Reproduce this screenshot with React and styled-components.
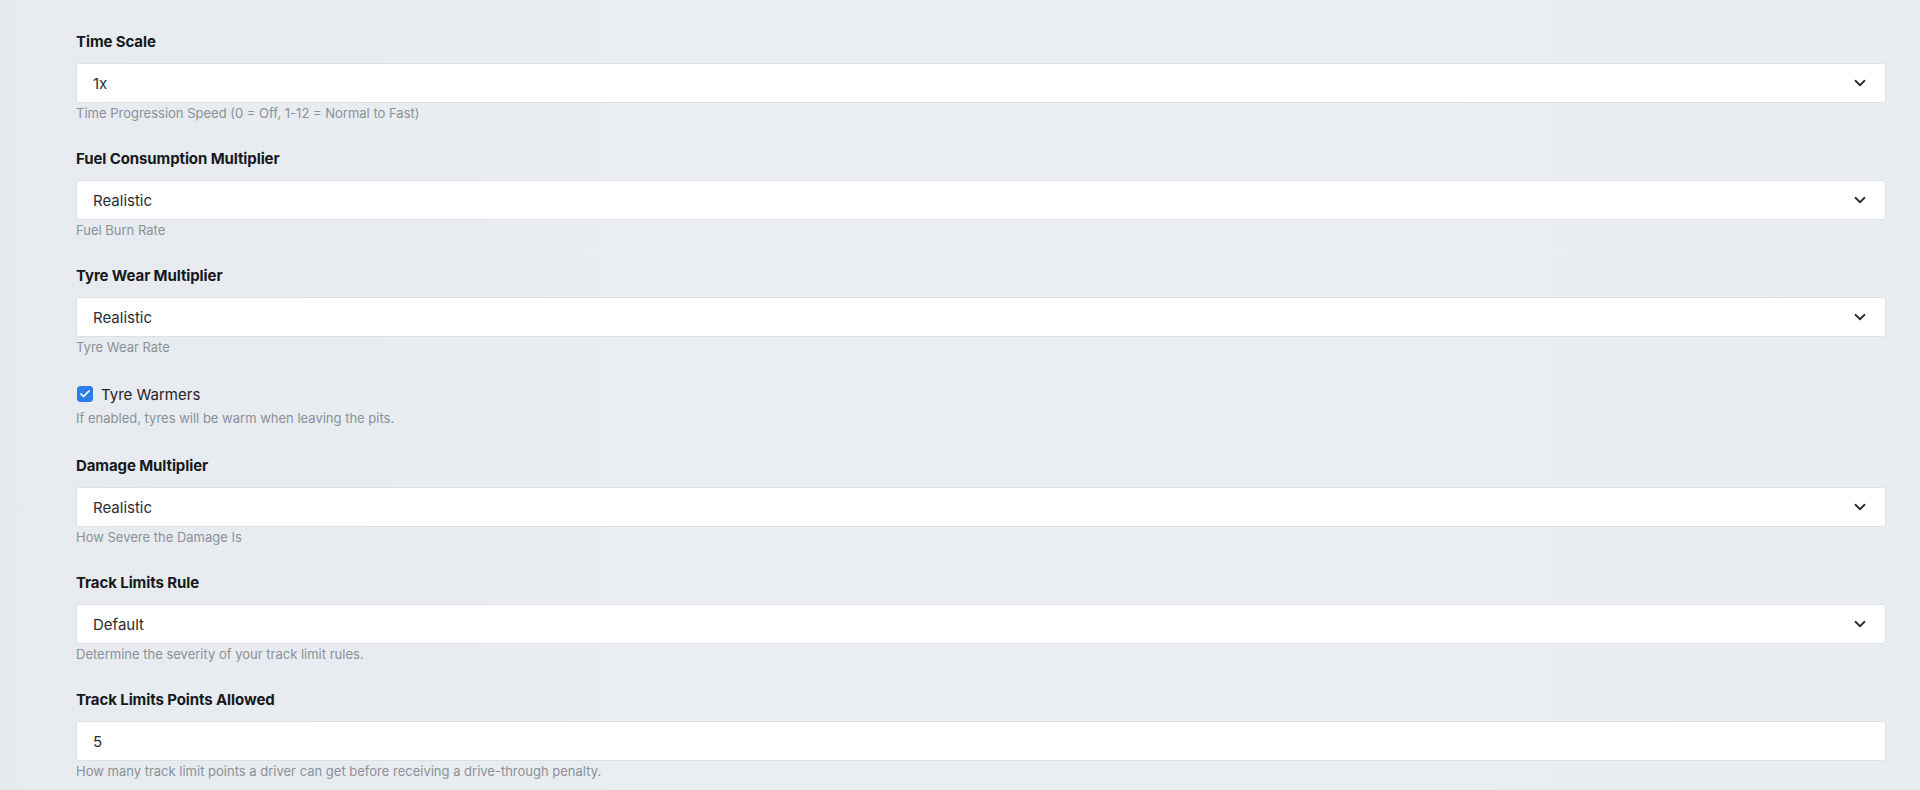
import React, { useState } from 'react';
import styled, { createGlobalStyle } from 'styled-components';
import { ChevronDown, Check } from 'lucide-react';

const GlobalStyle = createGlobalStyle`
  html, body {
    margin: 0;
    padding: 0;
    background: #e9ecf0;
  }
  body {
    font-family: Inter, "Noto Sans", "Liberation Sans", sans-serif;
    color: #1b1e22;
  }
`;

const fields = [
  {
    id: 'timeScale',
    label: 'Time Scale',
    type: 'select',
    value: '1x',
    options: ['0x', '1x', '2x', '4x', '8x', '12x'],
    help: 'Time Progression Speed (0 = Off, 1-12 = Normal to Fast)',
  },
  {
    id: 'fuel',
    label: 'Fuel Consumption Multiplier',
    type: 'select',
    value: 'Realistic',
    options: ['Off', 'Realistic', 'Double', 'Triple'],
    help: 'Fuel Burn Rate',
  },
  {
    id: 'tyreWear',
    label: 'Tyre Wear Multiplier',
    type: 'select',
    value: 'Realistic',
    options: ['Off', 'Realistic', 'Double', 'Triple'],
    help: 'Tyre Wear Rate',
  },
  {
    id: 'tyreWarmers',
    label: 'Tyre Warmers',
    type: 'checkbox',
    value: true,
    help: 'If enabled, tyres will be warm when leaving the pits.',
  },
  {
    id: 'damage',
    label: 'Damage Multiplier',
    type: 'select',
    value: 'Realistic',
    options: ['Off', 'Realistic', 'Double'],
    help: 'How Severe the Damage Is',
  },
  {
    id: 'trackLimits',
    label: 'Track Limits Rule',
    type: 'select',
    value: 'Default',
    options: ['Off', 'Default', 'Strict'],
    help: 'Determine the severity of your track limit rules.',
  },
  {
    id: 'trackPoints',
    label: 'Track Limits Points Allowed',
    type: 'number',
    value: '5',
    help: 'How many track limit points a driver can get before receiving a drive-through penalty.',
  },
];

const SelectField = ({ field, value, onChange }) => (
  <SelectWrap>
    <Select value={ value } onChange={ (e) => onChange(field.id, e.target.value) }>
      { field.options.map((o) => <option key={ o } value={ o }>{ o }</option>) }
    </Select>
    <Chevron>
      <ChevronDown size={ 18 } strokeWidth={ 2.4 } />
    </Chevron>
  </SelectWrap>
);

const App = () => {
  const [values, setValues] = useState(
    fields.reduce((acc, f) => ({ ...acc, [f.id]: f.value }), {}),
  );

  const update = (id, v) => setValues((prev) => ({ ...prev, [id]: v }));

  return (
    <Page>
      <GlobalStyle />
      <Form>
        { fields.map((field) => (
          field.type === 'checkbox' ? (
            <CheckSection key={ field.id }>
              <CheckRow>
                <HiddenBox
                  type="checkbox"
                  checked={ values[field.id] }
                  onChange={ (e) => update(field.id, e.target.checked) }
                />
                <Box checked={ values[field.id] }>
                  { values[field.id] && <Check size={ 12 } strokeWidth={ 3.5 } color="#fff" /> }
                </Box>
                <CheckLabel>{ field.label }</CheckLabel>
              </CheckRow>
              <Help>{ field.help }</Help>
            </CheckSection>
          ) : (
            <Section key={ field.id }>
              <Label>{ field.label }</Label>
              { field.type === 'select' ? (
                <SelectField field={ field } value={ values[field.id] } onChange={ update } />
              ) : (
                <Input
                  type="text"
                  value={ values[field.id] }
                  onChange={ (e) => update(field.id, e.target.value) }
                />
              ) }
              <Help $spaced>{ field.help }</Help>
            </Section>
          )
        )) }
      </Form>
    </Page>
  );
};

const Page = styled.div`
  min-height: 790px;
  box-sizing: border-box;
  padding: 32px 34px 0 76px;
  background: linear-gradient(90deg, #e7eaee 0%, #eaedf1 40%, #e9ecf0 100%);
`;

const Form = styled.div`
  display: flex;
  flex-direction: column;
  gap: 27px;
`;

const Section = styled.div`
  display: flex;
  flex-direction: column;
`;

const CheckSection = styled.div`
  display: flex;
  flex-direction: column;
  gap: 4px;
  margin-bottom: 2px;
`;

const Label = styled.label`
  font-size: 15px;
  font-weight: 700;
  line-height: 20px;
  color: #16191d;
  margin-bottom: 11px;
  letter-spacing: -0.1px;
`;

const controlBase = `
  width: 100%;
  height: 40px;
  box-sizing: border-box;
  border: 1px solid #dde1e6;
  border-radius: 3px;
  background: #fff;
  padding: 0 16px;
  font-family: Inter, "Noto Sans", "Liberation Sans", sans-serif;
  font-size: 15px;
  color: #2a2e33;
  outline: none;
`;

const SelectWrap = styled.div`
  position: relative;
  width: 100%;
`;

const Select = styled.select`
  ${controlBase}
  appearance: none;
  -webkit-appearance: none;
  cursor: pointer;
`;

const Chevron = styled.span`
  position: absolute;
  right: 17px;
  top: 50%;
  transform: translateY(-50%);
  display: flex;
  color: #2a2e33;
  pointer-events: none;
`;

const Input = styled.input`
  ${controlBase}
`;

const Help = styled.div`
  font-size: 13px;
  line-height: 18px;
  color: #8b9199;
  margin-top: ${ (p) => (p.$spaced ? '1px' : '0') };
`;

const CheckRow = styled.label`
  display: flex;
  align-items: center;
  gap: 8px;
  height: 22px;
  cursor: pointer;
`;

const HiddenBox = styled.input`
  position: absolute;
  opacity: 0;
  width: 0;
  height: 0;
`;

const Box = styled.span`
  width: 16px;
  height: 16px;
  border-radius: 3px;
  margin-left: 1px;
  display: flex;
  align-items: center;
  justify-content: center;
  background: ${ (p) => (p.checked ? '#2b7de9' : '#fff') };
  border: 1px solid ${ (p) => (p.checked ? '#2b7de9' : '#c9ced4') };
  box-sizing: border-box;
`;

const CheckLabel = styled.span`
  font-size: 15px;
  color: #1f2327;
`;

export default App;
